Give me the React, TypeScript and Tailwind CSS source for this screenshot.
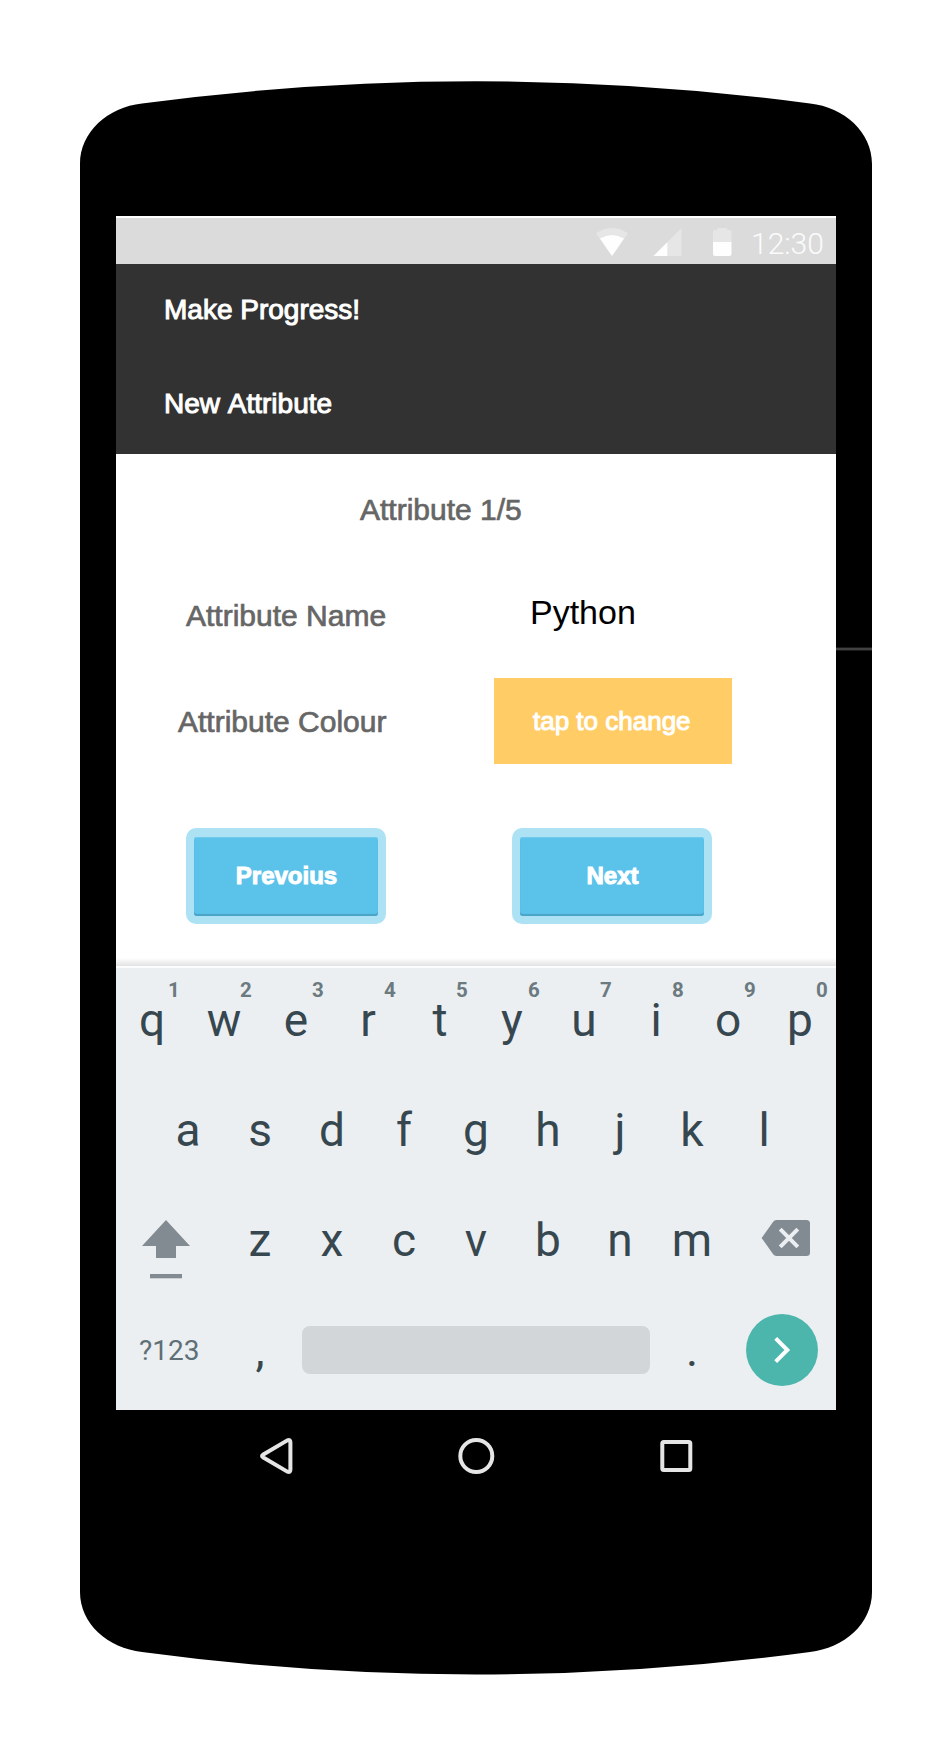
import React from "react";

const TOP_ROW = ["q", "w", "e", "r", "t", "y", "u", "i", "o", "p"];
const HINTS = ["1", "2", "3", "4", "5", "6", "7", "8", "9", "0"];
const HOME_ROW = ["a", "s", "d", "f", "g", "h", "j", "k", "l"];
const BOTTOM_ROW = ["z", "x", "c", "v", "b", "n", "m"];

function PhoneBody() {
  return (
    <svg className="absolute left-0 top-0" width="952" height="1756" viewBox="0 0 952 1756">
      <path d="M80 164 C80 132 108 107 142 103.5 Q308 81.3 476 81.3 Q644 81.3 810 103.5 C844 107 872 132 872 164 V1592 C872 1624 844 1648 810 1652 Q644 1674.5 476 1674.5 Q308 1674.5 142 1652 C108 1648 80 1624 80 1592 Z" fill="#000" />
      <rect x="836" y="647.6" width="36" height="2.8" fill="#424242" />
    </svg>
  );
}

function StatusBar() {
  return (
    <div className="flex h-12 items-start border-t-2 border-white bg-[#dbdbdb] pl-[480px]">
      <svg className="mt-2.5 shrink-0" width="32" height="28" viewBox="0 0 32 28">
        <path d="M0 5.2 Q16 -5.2 32 5.2 L16 28 Z" fill="#e6e6e6" />
        <path d="M4 10.6 Q16 3.6 28 10.6 L16 28 Z" fill="#fefefe" />
      </svg>
      <svg className="ml-[25px] mt-2.5 shrink-0" width="29" height="28" viewBox="0 0 29 28">
        <path d="M0.5 28 L28.5 0 V28 Z" fill="#e6e6e6" />
        <path d="M0.5 28 L14.3 14.2 V28 Z" fill="#fefefe" />
      </svg>
      <svg className="ml-[31px] mt-2.5 shrink-0" width="19" height="28" viewBox="0 0 19 28">
        <path d="M0 14 V3.5 Q0 2 1.5 2 H4.3 V0 H14.2 V2 H17 Q18.5 2 18.5 3.5 V14 Z" fill="#e6e6e6" />
        <path d="M0 14 H18.5 V26 Q18.5 28 16.5 28 H2 Q0 28 0 26 Z" fill="#fefefe" />
      </svg>
      <span className="ml-[19px] mt-1.5 font-['Roboto',sans-serif] text-[30px] font-light leading-10 text-[#fbfbfb]">12:30</span>
    </div>
  );
}

function FormButton({ label }: { label: string }) {
  return (
    <button className="flex h-24 w-[200px] rounded-[10px] bg-[#ade2f5] px-2 pb-2 pt-[9px]">
      <span className="flex h-[79px] w-full items-center justify-center rounded-[3px] bg-[#5bc2ea] pb-px pl-px text-2xl font-bold text-white shadow-[inset_0_-2px_1px_#4ba3c6,inset_0_1px_1px_#74cdee] [-webkit-text-stroke:1px_white]">
        {label}
      </span>
    </button>
  );
}

function Key({ label, hint }: { label: string; hint?: string }) {
  return (
    <div className="relative flex h-full w-[72px] shrink-0 items-center justify-center">
      {label}
      {hint && (
        <span className="absolute left-[46px] top-[10px] w-6 text-center text-[20.5px] font-bold leading-[24px] text-[#6c7a80]">{hint}</span>
      )}
    </div>
  );
}

function Keyboard() {
  return (
    <div className="h-[444px] border-t-2 border-[#fafcfd] bg-[#ebeff2] font-['Roboto',sans-serif] text-[46px] leading-none text-[#37474f]">
      <div className="flex h-[107px] pb-[3px]">
        {TOP_ROW.map((k, i) => (
          <Key key={k} label={k} hint={HINTS[i]} />
        ))}
      </div>
      <div className="flex h-[110px] justify-center">
        {HOME_ROW.map((k) => (
          <Key key={k} label={k} />
        ))}
      </div>
      <div className="flex h-[110px]">
        <div className="w-[108px] pl-[26px] pt-[35px]">
          <svg width="48" height="60" viewBox="0 0 48 60">
            <path d="M24 0 L48 26 H34 V38 H14 V26 H0 Z" fill="#838b92" />
            <rect x="8" y="54" width="32" height="4.3" fill="#838b92" />
          </svg>
        </div>
        {BOTTOM_ROW.map((k) => (
          <Key key={k} label={k} />
        ))}
        <div className="w-[108px] pl-[33px] pt-[35px]">
          <svg width="50" height="36" viewBox="0 0 50 36">
            <path d="M0.6 18 L12 2 Q13.2 0 15.5 0 H45.5 Q49 0 49 3.5 V32.5 Q49 36 45.5 36 H15.5 Q13.2 36 12 34 Z" fill="#838b92" />
            <path d="M19.2 9.2 L36.8 26.8 M36.8 9.2 L19.2 26.8" stroke="#ebeff2" strokeWidth="4" fill="none" />
          </svg>
        </div>
      </div>
      <div className="flex h-[110px] items-center">
        <div className="w-[108px] pl-[23px] pt-0.5 text-[28px] text-[#5f6f76]">?123</div>
        <Key label="," />
        <div className="mx-1.5 h-12 w-[348px] rounded-lg bg-[#d2d6d9]" />
        <Key label="." />
        <div className="flex w-[108px] justify-center">
          <div className="h-[72px] w-[72px] rounded-full bg-[#4db6ac]">
            <svg width="72" height="72" viewBox="0 0 72 72">
              <path d="M29.7 24.4 L41.3 36 L29.7 47.6" stroke="#fff" strokeWidth="4" fill="none" />
            </svg>
          </div>
        </div>
      </div>
    </div>
  );
}

function NavBar() {
  return (
    <div className="flex h-[92px] items-center justify-center">
      <div className="flex w-[200px] justify-center">
        <svg width="40" height="40" viewBox="0 0 40 40" fill="none" stroke="#e5e5e5" strokeWidth="4" strokeLinejoin="round">
          <path d="M6.9 18.8 L31.3 4.4 Q34.4 3.2 34.4 6.2 V33.8 Q34.4 36.8 31.3 35.6 L6.9 21.2 Q5.2 20 6.9 18.8 Z" />
        </svg>
      </div>
      <div className="flex w-[200px] justify-center">
        <svg width="40" height="40" viewBox="0 0 40 40">
          <circle cx="20.3" cy="20" r="16" fill="none" stroke="#e5e5e5" strokeWidth="4" />
        </svg>
      </div>
      <div className="flex w-[200px] justify-center">
        <svg width="40" height="40" viewBox="0 0 40 40">
          <rect x="6.3" y="6" width="28" height="28" rx="1.5" fill="none" stroke="#e5e5e5" strokeWidth="4" />
        </svg>
      </div>
    </div>
  );
}

export default function App() {
  return (
    <div className="relative h-[1756px] w-[952px] bg-white px-[116px] pt-[216px] font-['Liberation_Sans',Arial,sans-serif]">
      <PhoneBody />
      <div className="relative w-[720px]">
        <StatusBar />
        <header className="h-[190px] bg-[#323232] pl-12 text-[28px] text-white [-webkit-text-stroke:1px_white] [font-kerning:none]">
          <div className="flex h-[92px] items-center">Make Progress!</div>
          <div className="flex h-24 items-center">New Attribute</div>
        </header>
        <main className="flex h-[512px] flex-col bg-white text-[30px] text-[#666666]">
          <div className="flex h-28 items-center pb-0.5 pl-[244px] [-webkit-text-stroke:0.7px_#666666]">Attribute 1/5</div>
          <div className="flex h-[100px] items-center pl-[70px]">
            <span className="w-[344px] pb-0.5 [-webkit-text-stroke:0.7px_#666666]">Attribute Name</span>
            <span className="pb-2 text-[34px] leading-[40px] text-black">Python</span>
          </div>
          <div className="flex h-[110px] items-center pl-[62px]">
            <span className="w-[316px] [-webkit-text-stroke:0.7px_#666666]">Attribute Colour</span>
            <div className="flex h-[86px] w-[238px] items-center bg-[#ffcc66] pl-[39px] text-[26px] text-white [-webkit-text-stroke:1px_white]">tap to change</div>
          </div>
          <div className="flex gap-[126px] pl-[70px] pt-[52px]">
            <FormButton label="Prevoius" />
            <FormButton label="Next" />
          </div>
          <div className="mt-auto h-2 bg-linear-to-b from-white to-[#e2e2e2]" />
        </main>
        <Keyboard />
        <NavBar />
      </div>
    </div>
  );
}
